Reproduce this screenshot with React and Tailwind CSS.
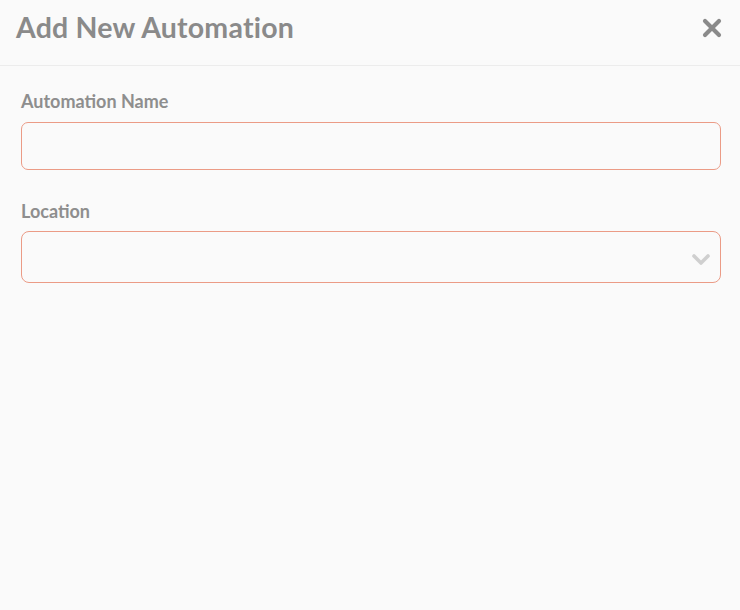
import React from "react";

export default function App() {
  return (
    <div className="w-[740px] h-[610px] bg-[#fafafa] flex flex-col" style={{ fontFamily: "Lato, 'Open Sans', sans-serif" }}>
      <div className="h-[66px] border-b border-[#ececec] flex items-center justify-between pl-4 pr-[18px]">
        <h1 className="text-[28.5px] font-bold text-[#8a8a8a] tracking-[0.2px] leading-none -mt-[10px]">Add New Automation</h1>
        <button className="text-[#8a8a8a] -mt-[10px]">
          <svg width="20" height="20" viewBox="0 0 20 20">
            <path d="M3 3 L17 17 M17 3 L3 17" stroke="#8a8a8a" strokeWidth="4.2" strokeLinecap="round" />
          </svg>
        </button>
      </div>
      <div className="pl-[21px] pr-[19px] pt-[26px] flex flex-col">
        <label className="text-[18px] font-bold text-[#8e8e8e] leading-none">Automation Name</label>
        <input className="mt-[12px] h-[48px] w-full rounded-[7px] border border-[#eb9b86] bg-[#fafafa] outline-none" />
        <label className="mt-[32px] text-[18px] font-bold text-[#8e8e8e] leading-none">Location</label>
        <div className="mt-[11px] h-[52px] w-full rounded-[8px] border border-[#eb9b86] flex items-center justify-end pr-[9px]">
          <svg width="20" height="14" viewBox="0 0 20 14" className="mt-[4px]">
            <path d="M3 4 L10 11 L17 4" fill="none" stroke="#cfcfcf" strokeWidth="3.6" strokeLinecap="round" strokeLinejoin="round" />
          </svg>
        </div>
      </div>
    </div>
  );
}
